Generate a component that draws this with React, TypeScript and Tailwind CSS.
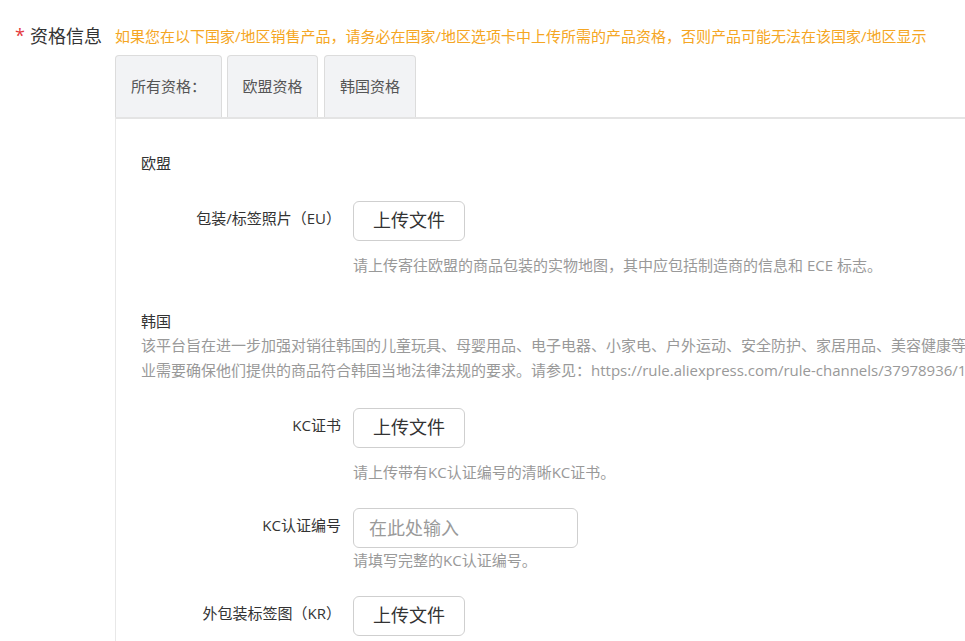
import React from "react";

const FONT = '"Open Sans", "Noto Sans CJK SC", sans-serif';

function UploadBtn() {
  return (
    <button className="w-[112px] h-[40px] pb-[3px] rounded-[6px] border border-[#cfcfcf] bg-white text-[18px] text-[#333] leading-[24px] flex items-center justify-center">
      上传文件
    </button>
  );
}

function Row({ label, children }: { label: string; children: React.ReactNode }) {
  return (
    <div className="flex items-start">
      <div className="w-[200px] pt-[5px] text-right text-[15px] leading-[24px] text-[#333] whitespace-nowrap">{label}</div>
      <div className="ml-[12px]">{children}</div>
    </div>
  );
}

function Help({ children }: { children: React.ReactNode }) {
  return <div className="ml-[212px] text-[15px] leading-[24px] text-[#999] whitespace-nowrap">{children}</div>;
}

export default function App() {
  return (
    <div className="w-[965px] h-[641px] overflow-hidden bg-white" style={{ fontFamily: FONT }}>
      <div className="flex items-center h-[24px] mt-[24px]">
        <div className="w-[115px] pl-[15px] flex items-center">
          <span className="w-[15px] text-[18px] leading-[24px] text-[#e4393c] -mt-[2px]">*</span>
          <span className="text-[18px] leading-[24px] text-[#333]">资格信息</span>
        </div>
        <div className="text-[15px] leading-[24px] text-[#f5a623] whitespace-nowrap">
          如果您在以下国家/地区销售产品，请务必在国家/地区选项卡中上传所需的产品资格，否则产品可能无法在该国家/地区显示
        </div>
      </div>

      <div className="ml-[115px] mt-[7px]">
        <div className="flex gap-[5px]">
          <div className="h-[62px] w-[107px] pl-[15px] flex items-center border border-b-0 border-[#dcdcdc] rounded-t-[4px] bg-[#f2f3f5] text-[15px] text-[#555]">所有资格：</div>
          <div className="h-[62px] w-[91px] flex items-center justify-center border border-b-0 border-[#dcdcdc] rounded-t-[4px] bg-[#f2f3f5] text-[15px] text-[#555]">欧盟资格</div>
          <div className="h-[62px] w-[92px] ml-[1px] flex items-center justify-center border border-b-0 border-[#dcdcdc] rounded-t-[4px] bg-[#f2f3f5] text-[15px] text-[#555]">韩国资格</div>
        </div>
        <div className="w-[1200px] h-[600px] border-t-2 border-t-[#e4e4e4] border-l border-l-[#e8e8e8] pl-[25px]">
          <div className="pt-[32px] text-[15px] leading-[24px] text-[#333]">欧盟</div>
          <div className="mt-[26px]">
            <Row label="包装/标签照片（EU）">
              <UploadBtn />
            </Row>
          </div>
          <div className="mt-[12px]">
            <Help>请上传寄往欧盟的商品包装的实物地图，其中应包括制造商的信息和 ECE 标志。</Help>
          </div>

          <div className="mt-[32px] text-[15px] leading-[24px] text-[#333]">韩国</div>
          <div className="text-[15px] leading-[25px] text-[#999] whitespace-nowrap">
            <div>该平台旨在进一步加强对销往韩国的儿童玩具、母婴用品、电子电器、小家电、户外运动、安全防护、家居用品、美容健康等产品的监管，相关企</div>
            <div>业需要确保他们提供的商品符合韩国当地法律法规的要求。请参见：https://rule.aliexpress.com/rule-channels/37978936/1000000000</div>
          </div>

          <div className="mt-[25px]">
            <Row label="KC证书">
              <UploadBtn />
            </Row>
          </div>
          <div className="mt-[12px]">
            <Help>请上传带有KC认证编号的清晰KC证书。</Help>
          </div>

          <div className="mt-[24px]">
            <Row label="KC认证编号">
              <input
                placeholder="在此处输入"
                className="w-[225px] h-[40px] rounded-[6px] border border-[#cfcfcf] px-[15px] text-[18px] text-[#333] placeholder:text-[#9a9a9a] outline-none"
                style={{ fontFamily: FONT }}
              />
            </Row>
          </div>
          <Help>请填写完整的KC认证编号。</Help>

          <div className="mt-[24px]">
            <Row label="外包装标签图（KR）">
              <UploadBtn />
            </Row>
          </div>
        </div>
      </div>
    </div>
  );
}
